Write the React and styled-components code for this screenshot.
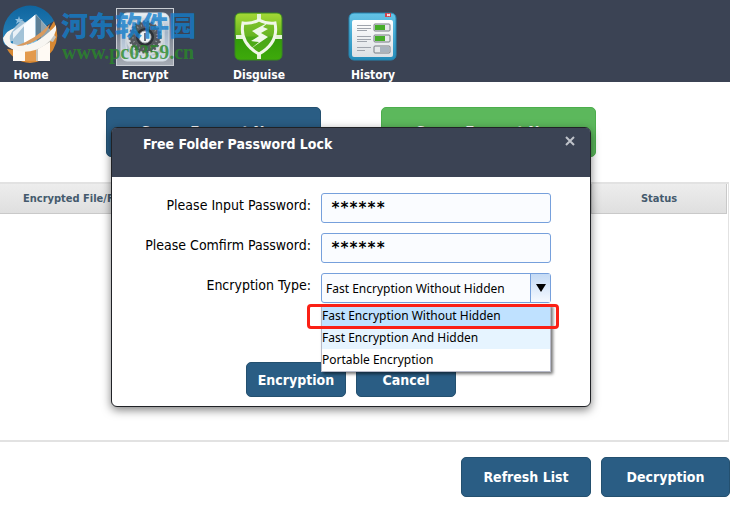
import React, { useState } from "react";
import styled, { createGlobalStyle } from "styled-components";

const GlobalStyle = createGlobalStyle`
  * { box-sizing: border-box; }
  body {
    margin: 0;
    background: #ffffff;
    color: #000000;
    font-family: "DejaVu Sans Condensed", "DejaVu Sans", sans-serif;
    font-stretch: condensed;
    font-size: 13px;
    overflow: hidden;
  }
  button, input, select { font: inherit; margin: 0; }
`;

const Page = styled.main`
  position: relative;
  display: flex;
  flex-direction: column;
  min-height: 100vh;
`;

const Header = styled.header`
  position: relative;
  height: 82px;
  background: #3b4354;
`;

const Nav = styled.nav`
  display: flex;
  gap: 54px;
  padding: 8px 1px 0;
`;

const NavButton = styled.button`
  display: flex;
  flex-direction: column;
  align-items: center;
  width: 60px;
  padding: 0;
  border: 0;
  background: none;
  color: #ffffff;
  font-size: 12px;
  line-height: 18px;
  font-weight: bold;
`;

const IconFrame = styled.span`
  display: flex;
  align-items: center;
  justify-content: center;
  width: 58px;
  height: 58px;
  border: 1px solid ${(p) => (p.$active ? "#c9cdd3" : "transparent")};
  background: ${(p) => (p.$active ? "linear-gradient(#4a5262, #8b919c 60%, #a4aab3)" : "none")};
  svg { display: block; flex: none; }
`;

const Watermark = styled.div`
  position: absolute;
  left: 61px;
  top: 8px;
  display: flex;
  flex-direction: column;
  pointer-events: none;
`;

const WatermarkName = styled.span`
  color: rgba(20, 126, 204, 0.8);
  font: 900 27px/34px "Noto Sans CJK SC", sans-serif;
`;

const WatermarkSite = styled.span`
  color: rgba(42, 138, 40, 0.8);
  font: bold 20px/20px "Liberation Serif", serif;
  padding-left: 1px;
`;

const Actions = styled.section`
  display: flex;
  gap: 60px;
  padding: 25px 106px 25px;
`;

const Button = styled.button`
  border: 1px solid ${(p) => (p.$green ? "#4cae4c" : "#24506f")};
  border-radius: 5px;
  background: ${(p) => (p.$green ? "#5cb85c" : "#2a5d84")};
  color: #ffffff;
  font-weight: bold;
  font-size: ${(p) => (p.$large ? 15 : 14)}px;
  line-height: 20px;
  padding: ${(p) => (p.$large ? 2 : 0)}px 0 0;
  width: ${(p) => p.$width}px;
  height: ${(p) => p.$height}px;
  flex: none;
`;

const TablePanel = styled.section`
  height: 260px;
  margin-right: 1px;
  border: solid #e2e2e2;
  border-width: 2px 1px 2px 0;
  padding-right: 1px;
`;

const FileTable = styled.table`
  width: 100%;
  border-collapse: separate;
  border-spacing: 0;
  table-layout: fixed;
`;

const Heading = styled.th`
  width: ${(p) => p.$width || "auto"};
  height: 30px;
  padding: 0 ${(p) => (p.$start ? 23 : 0)}px;
  border: solid #c9c9c9;
  border-width: 0 1px 1px 0;
  background: linear-gradient(#ededed, #dfdfdf);
  color: #445a6d;
  font-size: 11px;
  text-align: ${(p) => (p.$start ? "left" : "center")};
  white-space: nowrap;
`;

const Footer = styled.footer`
  display: flex;
  justify-content: flex-end;
  gap: 10px;
  padding-top: 15px;
`;

const Overlay = styled.div`
  position: absolute;
  inset: 0;
  display: flex;
  align-items: flex-start;
  justify-content: center;
  padding: 127px 28px 0 0;
`;

const Dialog = styled.section`
  width: 480px;
  height: 280px;
  border: 1px solid #202226;
  border-radius: 6px;
  background: #ffffff;
  box-shadow: 0 3px 10px rgba(0, 0, 0, 0.5);
`;

const DialogHeader = styled.header`
  display: flex;
  justify-content: space-between;
  align-items: flex-start;
  height: 49px;
  padding: 6px 14px 0 31px;
  border-radius: 4px 4px 0 0;
  background: #3b4354;
`;

const DialogTitle = styled.h1`
  margin: 0;
  color: #ffffff;
  font-size: 14px;
  line-height: 20px;
`;

const CloseButton = styled.button`
  display: flex;
  padding: 2px 0;
  border: 0;
  background: none;
  color: #bfc3ca;
`;

const Form = styled.form`
  display: grid;
  grid-template-columns: 199px 230px;
  column-gap: 10px;
  row-gap: 10px;
  padding-top: 16px;
`;

const Label = styled.label`
  padding-top: 2px;
  font-size: 14px;
  line-height: 20px;
  text-align: right;
  white-space: nowrap;
`;

const PasswordInput = styled.input`
  width: 100%;
  height: 30px;
  padding: 0 9px;
  border: 1px solid #76a0dc;
  border-radius: 3px;
  background: #fafcff;
  outline: 0;
  && {
    font-family: "DejaVu Sans Mono", monospace;
    font-size: 15px;
    font-weight: bold;
  }
`;

const Picker = styled.div`
  position: relative;
  height: 30px;
  font-family: "Noto Sans", sans-serif;
  font-size: 12px;
`;

const Select = styled.select`
  appearance: none;
  width: 100%;
  height: 30px;
  padding: 0 24px 0 4px;
  border: 1px solid #76a0dc;
  border-radius: 3px;
  background: #fafcff;
  color: #000000;
  outline: 0;
`;

const Arrow = styled.span`
  position: absolute;
  inset: 1px 1px 1px auto;
  display: flex;
  align-items: center;
  justify-content: center;
  width: 20px;
  border-left: 1px solid #76a0dc;
  background: linear-gradient(#c4daf4, #f5f9ff);
  pointer-events: none;
`;

const Options = styled.ul`
  position: absolute;
  top: 31px;
  left: 0;
  right: 0;
  z-index: 1;
  margin: 0;
  padding: 0;
  list-style: none;
  border: 1px solid #b7bac9;
  background: #ffffff;
  box-shadow: 2px 2px 3px rgba(0, 0, 0, 0.55);
`;

const tones = { selected: "#bfe1ff", hover: "#e6f4ff", plain: "#ffffff" };

const Option = styled.li`
  height: 22px;
  background: ${(p) => tones[p.$tone]};
  line-height: 22px;
  white-space: nowrap;
`;

const Highlight = styled.span`
  position: absolute;
  top: 31px;
  left: -14px;
  right: -8px;
  z-index: 2;
  height: 25px;
  border: 3px solid #fb2015;
  border-radius: 4px;
  pointer-events: none;
`;

const DialogActions = styled.div`
  grid-column: 1 / -1;
  display: flex;
  gap: 10px;
  padding: 49px 0 0 134px;
`;

const HomeIcon = () => (
  <svg width="58" height="58" viewBox="0 0 58 58" overflow="visible">
    <defs>
      <linearGradient id="sky" x2="0" y2="1">
        <stop stopColor="#0f659f" /><stop offset="1" stopColor="#2b86bd" />
      </linearGradient>
    </defs>
    <path d="M1 28A27 28 0 0 1 52 13Q40 20 33 28Q21 42 3 37Q0 33 1 28Z" fill="url(#sky)" />
    <path d="M52 13Q59 28 51 42Q43 54 28 55Q12 54 5 41Q28 45 43 28Z" fill="#d88832" />
    <path d="M34 6L54 29L51 34L48 33V53H11V33L5 34L3 29L20 12L25 16Z" fill="#c3d5e1" fillOpacity=".8" />
    <path d="M33 7V41H23V17L11 31V24Z" fill="#e9f1f7" />
    <path d="M22 17L33 7V34L22 38Z" fill="#fbfdff" />
    <path d="M34 7L50 25L39 38L34 33Z" fill="#8fa3ae" />
    <path d="M34 7L39 12V37L34 35Z" fill="#5d7f96" />
    <path d="M23 41H34V53H23Z" fill="#e39a4d" />
    <path d="M11 41L23 42V53H11ZM36 41L48 34V53H36Z" fill="#fffaf4" />
    <path d="M25 34L35 32V40L25 42Z" fill="#68b9e9" />
    <path d="M30 33V41M25 38L35 36" stroke="#c9e9fa" />
    <path d="M1 30Q5 22 13 20Q5 28 9 35Q24 42 41 29Q50 22 54 17Q56 27 43 37Q27 48 10 41Q1 37 1 30Z" fill="#f8f6f2" />
    <path d="M48 16Q45 27 31 34Q23 38 14 38Q34 31 48 16Z" fill="#d99a5e" />
    <path d="M17 8l1 3h3l-2 2 1 3-3-2-3 2 1-3-2-2h3z" fill="#8ebfe0" />
  </svg>
);

const SafeIcon = () => (
  <svg width="50" height="50" viewBox="0 0 50 50">
    <defs>
      <linearGradient id="safe" x2="0" y2="1">
        <stop stopColor="#eef3f6" /><stop offset=".4" stopColor="#a2b4c7" /><stop offset="1" stopColor="#d6e0ec" />
      </linearGradient>
    </defs>
    <rect x="1" y="1" width="48" height="48" rx="6" fill="url(#safe)" stroke="#d7dee5" />
    <rect x="6" y="6" width="38" height="38" rx="10" fill="#b2bfca" stroke="#d9e0e6" />
    <circle cx="25" cy="25" r="19" fill="#d4d9de" />
    <circle cx="25" cy="25" r="15" fill="#55595e" />
    <circle cx="25" cy="25" r="15" fill="none" stroke="#55595e" strokeWidth="3" strokeDasharray="2 2" />
    <circle cx="25" cy="25" r="12" fill="none" stroke="#8b9197" strokeWidth="2" strokeDasharray="1 3" />
    <circle cx="25" cy="25" r="9" fill="#2c3136" />
    <circle cx="25" cy="25" r="6" fill="#eef2f4" stroke="#a9afb4" />
    <path d="M25 21V29" stroke="#667079" strokeWidth="2" />
  </svg>
);

const ShieldIcon = () => (
  <svg width="50" height="50" viewBox="0 0 50 50">
    <defs>
      <linearGradient id="shield" x2="0" y2="1">
        <stop stopColor="#a5d936" /><stop offset=".48" stopColor="#68b51d" /><stop offset=".52" stopColor="#329b08" /><stop offset="1" stopColor="#3eaa0b" />
      </linearGradient>
    </defs>
    <rect x="1" y="1" width="47" height="47" rx="5" fill="url(#shield)" stroke="#398821" />
    <path d="M25 2V9M25 41V47M2 25H9M41 25H48" stroke="#e3f3d5" strokeWidth="4" />
    <path d="M25 8Q18 12 9 11Q5 31 25 42Q45 31 41 11Q32 12 25 8Z" fill="#69b62b" fillOpacity=".45" stroke="#f0f7e7" strokeWidth="3" />
    <path d="M35 10L18 19L25 24L17 29L25 30L15 38L34 25L27 21L34 17L29 15Z" fill="#eff8e9" />
  </svg>
);

const HistoryIcon = () => (
  <svg width="50" height="50" viewBox="0 0 50 50">
    <defs>
      <linearGradient id="window" x2="0" y2="1">
        <stop stopColor="#64c4e7" /><stop offset="1" stopColor="#248cba" />
      </linearGradient>
      <linearGradient id="sheet" x2="0" y2="1">
        <stop stopColor="#ffffff" /><stop offset="1" stopColor="#dce0e4" />
      </linearGradient>
    </defs>
    <rect x="1" y="1" width="47" height="47" rx="5" fill="url(#window)" stroke="#2785af" />
    <rect x="4" y="8" width="41" height="37" rx="2" fill="url(#sheet)" />
    <path d="M37 1H43V5H37Z" fill="#cf444f" />
    <path d="M39 2L42 4M42 2L39 4" stroke="#fff" />
    <path d="M9 13.500H23M9 16.500H23M9 18.500H19M9 24.500H23M9 27.500H23M9 29.500H19M9 35.500H23M9 38.500H17" stroke="#9fa4ac" />
    <g stroke="#777d83" fill="#e6e8ea">
      <rect x="26" y="12" width="16" height="7" rx="1" />
      <rect x="26" y="23" width="16" height="7" rx="1" />
      <rect x="26" y="34" width="16" height="7" rx="1" />
    </g>
    <path d="M27 13H37V18H27ZM27 24H37V29H27Z" fill="#46ad28" />
    <path d="M32 35H41V40H32Z" fill="#a9b3be" />
  </svg>
);

const navigation = [
  { name: "Home", Icon: HomeIcon },
  { name: "Encrypt", Icon: SafeIcon, active: true },
  { name: "Disguise", Icon: ShieldIcon },
  { name: "History", Icon: HistoryIcon },
];

const options = [
  { text: "Fast Encryption Without Hidden", tone: "selected" },
  { text: "Fast Encryption And Hidden", tone: "hover" },
  { text: "Portable Encryption", tone: "plain" },
];

export default function App() {
  const [password, setPassword] = useState("******");
  const [confirmation, setConfirmation] = useState("******");
  const [type, setType] = useState(options[0].text);

  return (
    <Page>
      <GlobalStyle />
      <Header>
        <Nav>
          {navigation.map(({ name, Icon, active }) => (
            <NavButton key={name} type="button">
              <IconFrame $active={active}><Icon /></IconFrame>
              {name}
            </NavButton>
          ))}
        </Nav>
        <Watermark>
          <WatermarkName>河东软件园</WatermarkName>
          <WatermarkSite>www.pc0359.cn</WatermarkSite>
        </Watermark>
      </Header>
      <Actions>
        <Button type="button" $large $width={215} $height={50}>Super Encrypt Now</Button>
        <Button type="button" $large $green $width={215} $height={50}>Super Encrypt Now</Button>
      </Actions>
      <TablePanel>
        <FileTable>
          <thead>
            <tr>
              <Heading $start>Encrypted File/Folder</Heading>
              <Heading $width="135px">Status</Heading>
            </tr>
          </thead>
        </FileTable>
      </TablePanel>
      <Footer>
        <Button type="button" $width={130} $height={40}>Refresh List</Button>
        <Button type="button" $width={129} $height={40}>Decryption</Button>
      </Footer>
      <Overlay>
        <Dialog role="dialog" aria-labelledby="dialog-title">
          <DialogHeader>
            <DialogTitle id="dialog-title">Free Folder Password Lock</DialogTitle>
            <CloseButton type="button" aria-label="Close">
              <svg width="12" height="10" viewBox="0 0 12 10">
                <path d="M2 1L10 9M10 1L2 9" stroke="currentColor" strokeWidth="2" />
              </svg>
            </CloseButton>
          </DialogHeader>
          <Form onSubmit={(e) => e.preventDefault()}>
            <Label htmlFor="password">Please Input Password:</Label>
            <PasswordInput id="password" value={password} onChange={(e) => setPassword(e.target.value)} />
            <Label htmlFor="confirmation">Please Comfirm Password:</Label>
            <PasswordInput id="confirmation" value={confirmation} onChange={(e) => setConfirmation(e.target.value)} />
            <Label htmlFor="type">Encryption Type:</Label>
            <Picker>
              <Select id="type" value={type} onChange={(e) => setType(e.target.value)}>
                {options.map(({ text }) => <option key={text}>{text}</option>)}
              </Select>
              <Arrow>
                <svg width="10" height="8" viewBox="0 0 10 8"><path d="M0 0H10L5 8Z" /></svg>
              </Arrow>
              <Options role="listbox" aria-label="Encryption Type">
                {options.map(({ text, tone }) => (
                  <Option key={text} role="option" aria-selected={text === type} $tone={tone} onClick={() => setType(text)}>
                    {text}
                  </Option>
                ))}
              </Options>
              <Highlight />
            </Picker>
            <DialogActions>
              <Button type="submit" $width={100} $height={35}>Encryption</Button>
              <Button type="button" $width={100} $height={35}>Cancel</Button>
            </DialogActions>
          </Form>
        </Dialog>
      </Overlay>
    </Page>
  );
}
